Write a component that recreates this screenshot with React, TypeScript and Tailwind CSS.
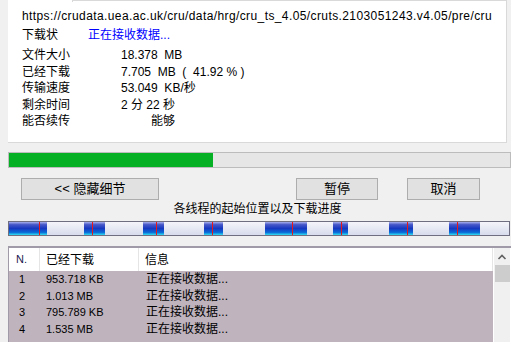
import React from 'react';

const font = { fontFamily: '"Liberation Sans", "Noto Sans CJK SC", sans-serif' };

const info = [
  { label: '文件大小', value: '18.378  MB' },
  { label: '已经下载', value: '7.705  MB  (  41.92 % )' },
  { label: '传输速度', value: '53.049  KB/秒' },
  { label: '剩余时间', value: '2 分 22 秒' },
  { label: '能否续传', value: '         能够' },
];

const threads = [
  { n: '1', got: '953.718 KB' },
  { n: '2', got: '1.013 MB' },
  { n: '3', got: '795.789 KB' },
  { n: '4', got: '1.535 MB' },
];

// thread segments, x relative to bar (bar starts at x=8)
const segs = [
  [1, 39, 31],
  [76, 97, 84],
  [135, 156, 148],
  [196, 215, 204],
  [257, 299, 284],
  [325, 340, 333],
  [381, 405, 399],
  [441, 472, 449],
];

function ThreadBar() {
  return (
    <svg width="502" height="15" className="block">
      <defs>
        <linearGradient id="blue" x1="0" y1="0" x2="0" y2="1">
          <stop offset="0" stopColor="#a8b0ec" />
          <stop offset="0.2" stopColor="#4858c8" />
          <stop offset="0.5" stopColor="#1838c0" />
          <stop offset="0.8" stopColor="#0a6cd8" />
          <stop offset="1" stopColor="#30e0f0" />
        </linearGradient>
        <linearGradient id="light" x1="0" y1="0" x2="0" y2="1">
          <stop offset="0" stopColor="#f6f6fb" />
          <stop offset="1" stopColor="#d6dbeb" />
        </linearGradient>
      </defs>
      <rect x="0.5" y="0.5" width="501" height="14" fill="url(#light)" stroke="#6e6e80" />
      {segs.map(([a, b, r], i) => (
        <g key={i}>
          <rect x={a} y="1" width={b - a} height="13" fill="url(#blue)" />
          <rect x={r} y="1" width="1" height="13" fill="#e81818" />
        </g>
      ))}
    </svg>
  );
}

function Btn({ w, children }: { w: string; children: React.ReactNode }) {
  return (
    <div className={`${w} h-[22px] flex items-center justify-center bg-[#e1e1e1] border border-[#adadad] text-[13px] text-black`}>
      {children}
    </div>
  );
}

export default function App() {
  return (
    <div className="w-[511px] h-[342px] overflow-hidden bg-[#f0f0f0] text-[12px] text-black" style={font}>
      <div className="ml-2 w-[499px] h-[143px] bg-white border-r border-b border-[#d9d9d9] pl-[14px]">
        <div className="flex h-[8px] -ml-[14px]">
          <div className="w-[64px]" />
          <div className="flex-1 h-[2px] border-t border-l border-[#d9d9d9]" />
        </div>
        <div className="h-4 leading-4 whitespace-nowrap overflow-hidden tracking-[0.4px]">
          https://crudata.uea.ac.uk/cru/data/hrg/cru_ts_4.05/cruts.2103051243.v4.05/pre/cru
        </div>
        <div className="mt-[3px] h-4 leading-4 flex">
          <span className="w-[66px]">下载状</span>
          <span className="text-[#0000ff]">正在接收数据...</span>
        </div>
        <div className="mt-[4px]">
          {info.map((r) => (
            <div key={r.label} className="flex h-[16.5px] leading-[16.5px]">
              <span className="w-[99px]">{r.label}</span>
              <span className="whitespace-pre">{r.value}</span>
            </div>
          ))}
        </div>
      </div>

      <div className="mt-[9px] ml-2 w-[503px] h-4 border border-[#bcbcbc] bg-[#e6e6e6]">
        <div className="h-full w-[204px] bg-[#06b025]" />
      </div>

      <div className="mt-[10px] flex">
        <div className="ml-[21px]">
          <Btn w="w-[138px]">&lt;&lt; 隐藏细节</Btn>
        </div>
        <div className="ml-[137px]">
          <Btn w="w-[82px]">暂停</Btn>
        </div>
        <div className="ml-[29px]">
          <Btn w="w-[73px]">取消</Btn>
        </div>
      </div>

      <div className="h-[19px] leading-[19px] text-center pl-[4px]">各线程的起始位置以及下载进度</div>

      <div className="ml-2 mt-[2px]">
        <ThreadBar />
      </div>

      <div className="mt-[10px] ml-2 w-[503px] h-[120px] border-t-2 border-l border-[#a09aa8] bg-white flex">
        <div className="w-[484px]">
          <div className="flex h-[23px] items-center bg-white">
            <div className="w-[31px] h-full pl-[7px] flex items-center border-r border-[#e5e5e5] text-[11px] text-[#1a1a50]">N.</div>
            <div className="w-[99px] h-full pl-[6px] flex items-center border-r border-[#e5e5e5]">已经下载</div>
            <div className="flex-1 h-full pl-[6px] flex items-center border-r border-[#e5e5e5]">信息</div>
          </div>
          <div className="bg-[#bfb3bd] h-[100px]">
            {threads.map((t) => (
              <div key={t.n} className="flex h-[16.5px] leading-[16.5px]">
                <div className="w-[31px] pl-[10px] text-[11px]">{t.n}</div>
                <div className="w-[99px] pl-[6px] text-[11px]">{t.got}</div>
                <div className="pl-[7px]">正在接收数据...</div>
              </div>
            ))}
          </div>
        </div>
        <div className="w-[16px] ml-[1px] bg-[#f0f0f0] flex flex-col items-center">
          <svg width="16" height="17" className="block">
            <path d="M4.5 11 L8 7.5 L11.5 11" fill="none" stroke="#606060" strokeWidth="1.6" />
          </svg>
          <div className="w-[15px] h-[17px] bg-[#cdcdcd]" />
        </div>
      </div>
    </div>
  );
}
